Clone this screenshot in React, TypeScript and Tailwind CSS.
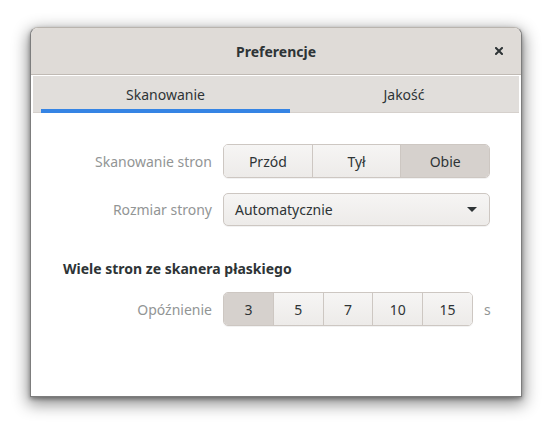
import React from "react";

const font = { fontFamily: '"Noto Sans", "Open Sans", sans-serif' };

function Seg({ items, selected, width }: { items: string[]; selected: number; width: string }) {
  return (
    <div className={"flex h-[34px] rounded-[5px] border border-[#cdc7c2] overflow-hidden shadow-[0_1px_0_rgba(0,0,0,0.05)] " + width}>
      {items.map((it, i) => (
        <div
          key={it}
          className={
            "flex-1 flex items-center justify-center text-[14px] text-[#2e3436] " +
            (i > 0 ? "border-l border-[#cdc7c2] " : "") +
            (i === selected ? "bg-[#d6d1cd]" : "bg-gradient-to-b from-[#f6f5f4] to-[#edebe9]")
          }
        >
          {it}
        </div>
      ))}
    </div>
  );
}

export default function App() {
  return (
    <div className="w-[557px] h-[435px] bg-white overflow-hidden pt-[27px] pl-[30px]" style={font}>
      <div className="w-[492px] h-[370px] rounded-t-[8px] border border-[#7d7d7d] border-t-[#b9b4ae] bg-white flex flex-col shadow-[0_5px_16px_2px_rgba(0,0,0,0.45),0_2px_4px_rgba(0,0,0,0.35)] overflow-hidden">
        <div className="h-[47px] shrink-0 bg-[#dfdbd7] border-b border-[#c0bab4] flex items-center justify-center relative">
          <span className="text-[14px] font-bold text-[#2e3436]">Preferencje</span>
          <svg className="absolute right-[18px] top-[19px]" width="8" height="8" viewBox="0 0 8 8">
            <path d="M1 1L7 7M7 1L1 7" stroke="#2e3436" strokeWidth="2" strokeLinecap="square" />
          </svg>
        </div>
        <div className="flex-1 flex flex-col bg-white p-[2px] pt-[1px]">
          <div className="h-[37px] shrink-0 bg-[#e1dedb] flex pl-[8px] border-b border-[#d5d0cc]">
            <div className="w-[249px] relative flex items-center justify-center text-[14px] text-[#2e3436]">
              Skanowanie
              <div className="absolute left-0 right-0 bottom-[-1px] h-[4px] bg-[#3584e4]" />
            </div>
            <div className="w-[228px] flex items-center justify-center text-[14px] text-[#2e3436]">Jakość</div>
          </div>
          <div className="flex flex-col pl-[30px] pt-[31px]">
            <div className="flex items-center">
              <div className="w-[149px] text-right text-[14px] text-[#929595]">Skanowanie stron</div>
              <div className="ml-[11px]">
                <Seg items={["Przód", "Tył", "Obie"]} selected={2} width="w-[267px]" />
              </div>
            </div>
            <div className="flex items-center mt-[15px]">
              <div className="w-[149px] text-right text-[14px] text-[#929595]">Rozmiar strony</div>
              <div className="ml-[11px] w-[267px] h-[33px] rounded-[5px] border border-[#cdc7c2] bg-gradient-to-b from-[#f6f5f4] to-[#edebe9] flex items-center pl-[11px] pr-[12px] shadow-[0_1px_0_rgba(0,0,0,0.05)]">
                <span className="flex-1 text-[14px] text-[#2e3436]">Automatycznie</span>
                <svg width="10" height="5" viewBox="0 0 10 5">
                  <path d="M0 0H10L5 5Z" fill="#2e3436" />
                </svg>
              </div>
            </div>
            <div className="mt-[33px] text-[14px] font-bold text-[#2e3436] leading-[20px]">Wiele stron ze skanera płaskiego</div>
            <div className="flex items-center mt-[13px]">
              <div className="w-[149px] text-right text-[14px] text-[#929595]">Opóźnienie</div>
              <div className="ml-[11px]">
                <Seg items={["3", "5", "7", "10", "15"]} selected={0} width="w-[250px]" />
              </div>
              <span className="ml-[11px] text-[14px] text-[#929595]">s</span>
            </div>
          </div>
        </div>
      </div>
    </div>
  );
}
